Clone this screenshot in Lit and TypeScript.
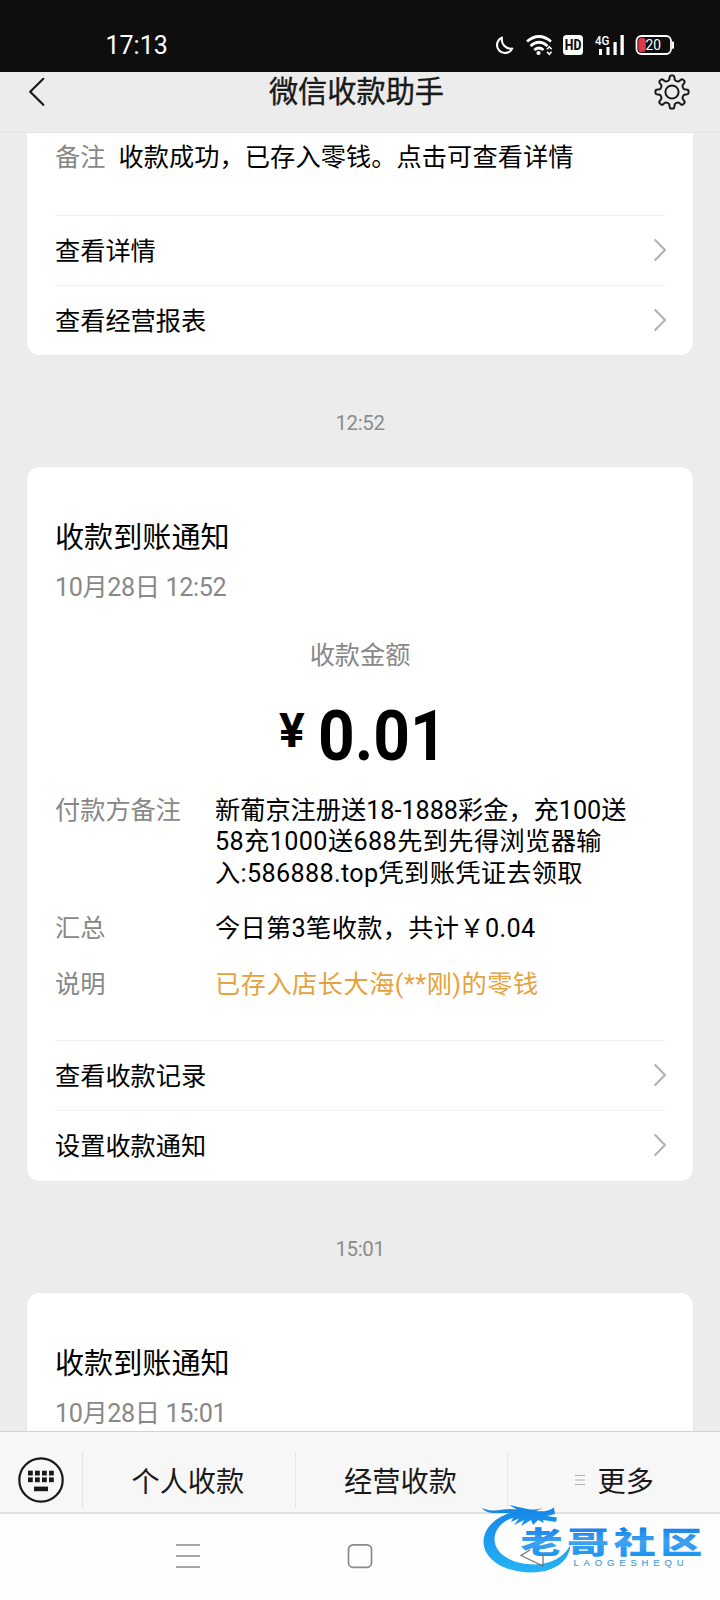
import { LitElement, html, css, svg, nothing } from "lit";
import { customElement, property } from "lit/decorators.js";

const font = css`Roboto, "Noto Sans CJK SC", sans-serif`;

@customElement("status-bar")
class StatusBar extends LitElement {
  static styles = css`
    :host { display: flex; height: 72px; background: #0e0e0e; color: #fff; font-family: ${font};
      box-sizing: border-box; padding: 27px 44px 9px 105.5px; align-items: center; justify-content: space-between; }
    .clock { font-size: 25px; line-height: 36px; letter-spacing: 0; padding-top: 2px; }
    svg { display: block; }
    .small { font: 500 13px Roboto, sans-serif; fill: #fff; }
    .hd { font: 800 15px Roboto, sans-serif; fill: #0e0e0e; }
    .pct { font: 400 15px Roboto, sans-serif; fill: #fff; }
  `;
  render() {
    return html`
      <span class="clock">17:13</span>
      <svg width="182" height="24" viewBox="494 33 182 24">
        <path d="M502 37.6A8 8 0 1 0 512.2 48.6A9.2 9.2 0 0 1 502 37.6Z" fill="none" stroke="#fff" stroke-width="2.1" stroke-linejoin="round"/>
        <g fill="none" stroke="#fff" stroke-width="2.7">
          <path d="M527 41.5Q539 31.5 551 41.5"/>
          <path d="M530.5 46Q539 38.5 547.5 46"/>
          <path d="M534.3 50Q539 46 543.5 50"/>
        </g>
        <circle cx="538.5" cy="53" r="2.1" fill="#fff"/>
        <path d="M547 49.3L549.3 46.8L551.6 49.3M547 51.7L549.3 54.2L551.6 51.7" fill="none" stroke="#fff" stroke-width="1.6"/>
        <rect x="563" y="35" width="20" height="20" rx="3.5" fill="#fff"/>
        <text class="hd" x="564.8" y="50.3" textLength="16.6" lengthAdjust="spacingAndGlyphs">HD</text>
        <text class="small" x="595" y="45" textLength="14.5" lengthAdjust="spacingAndGlyphs">4G</text>
        <path d="M599 49h3v6h-3zM606.5 47h3v8h-3zM613.5 42h3.2v13h-3.2zM620.5 35h3.3v20h-3.3z" fill="#fff"/>
        <rect x="636.5" y="36" width="34.5" height="18" rx="5" fill="none" stroke="#fff" stroke-width="1.8"/>
        <rect x="638.3" y="37.8" width="7.5" height="14.4" rx="3.4" fill="#dc3a4b"/>
        <path d="M672 41.5h1.2q.8 0 .8 .8v5.6q0 .8-.8 .8H672z" fill="#fff"/>
        <text class="pct" x="645.5" y="50.3" textLength="15.5" lengthAdjust="spacingAndGlyphs">20</text>
      </svg>
    `;
  }
}

/** Outline of a gear with eight rounded teeth around the origin. */
function gearPath(inner: number, outer: number): string {
  const point = (radius: number, degrees: number) => {
    const a = (degrees * Math.PI) / 180;
    return `${(radius * Math.sin(a)).toFixed(2)} ${(-radius * Math.cos(a)).toFixed(2)}`;
  };
  let d = "";
  for (let i = 0; i < 8; i++) {
    const c = i * 45;
    d += `${i ? "L" : "M"}${point(inner, c - 13)}L${point(outer - 2, c - 9.5)}`;
    d += `Q${point(outer, c - 8)} ${point(outer, c - 4)}L${point(outer, c + 4)}`;
    d += `Q${point(outer, c + 8)} ${point(outer - 2, c + 9.5)}L${point(inner, c + 13)}`;
    d += `Q${point(inner - 1.2, c + 22.5)} ${point(inner, c + 32)}`;
  }
  return d + "Z";
}

@customElement("chat-header")
class ChatHeader extends LitElement {
  static styles = css`
    :host { display: flex; height: 61px; background: #ececec; border-bottom: 1px solid #e3e3e3; font-family: ${font};
      box-sizing: border-box; padding: 0 29px 21px 28px; align-items: center; justify-content: space-between; }
    h1 { margin: 0 6px 0 0; padding-top: 1px; font-size: 29.2px; font-weight: 400; line-height: 40px; color: #191919; -webkit-text-stroke: 0.4px #191919; }
    .side { width: 40px; display: flex; }
    .right { justify-content: flex-end; }
  `;
  render() {
    return html`
      <div class="side">
        <svg width="18" height="30" viewBox="0 0 18 30"><path d="M15.3 1.8L2.2 14.8L15.3 27.8" fill="none" stroke="#191919" stroke-width="2.2" stroke-linecap="round" stroke-linejoin="round"/></svg>
      </div>
      <h1>微信收款助手</h1>
      <div class="side right">
        <svg width="38" height="38" viewBox="-19 -19 38 38">
          <path d=${gearPath(12.4, 16.6)} fill="none" stroke="#191919" stroke-width="2" stroke-linejoin="round"/>
          <circle r="6.6" fill="none" stroke="#191919" stroke-width="2"/>
        </svg>
      </div>
    `;
  }
}

@customElement("link-row")
class LinkRow extends LitElement {
  @property() label = "";
  static styles = css`
    :host { display: flex; height: 70px; box-sizing: border-box; border-top: 1px solid #f0f0f0; align-items: center;
      justify-content: space-between; font: 25.2px/36px ${font}; color: #000; padding-top: 3px; }
    svg { display: block; margin: -5px -2px 0 0; }
  `;
  render() {
    return html`<span>${this.label}</span>
      <svg width="14" height="24" viewBox="0 0 14 24"><path d="M2.2 2L12 12L2.2 22" fill="none" stroke="#b2b2b2" stroke-width="2.1" stroke-linecap="round" stroke-linejoin="round"/></svg>`;
  }
}

interface Field { label: string; lines: { text: string; spacing?: number }[]; accent?: boolean; }

@customElement("notice-card")
class NoticeCard extends LitElement {
  @property() time = "";
  @property() amount = "";
  @property({ attribute: false }) fields: Field[] = [];
  @property({ attribute: false }) links: string[] = [];
  static styles = css`
    :host { display: block; background: #fff; border-radius: 13px; padding: 49px 28px 0; font-family: ${font}; }
    h2 { margin: 0; font-size: 29.1px; font-weight: 400; line-height: 44px; color: #000; }
    .time { font-size: 25.2px; line-height: 36px; color: #888; margin-top: 10px; letter-spacing: -0.4px; }
    .caption { font-size: 25.2px; line-height: 36px; color: #888; text-align: center; margin-top: 32px; }
    .amount { display: flex; height: 80px; margin-top: 22px; padding-left: 224px; color: #000; font-weight: 700; }
    .yen { font-size: 48px; line-height: 70px; width: 38.5px; }
    .sum { font-size: 70px; line-height: 80px; transform: scaleX(0.915); transform-origin: left; }
    .fields { display: grid; grid-template-columns: 160px 1fr; row-gap: 24px; margin: 19px 0 40px; font-size: 25.2px; line-height: 31.4px; }
    .label { color: #888; }
    .value { color: #000; white-space: nowrap; }
    .accent { color: #e6a23c; }
    .line { display: block; }
  `;
  render() {
    return html`
      <h2>收款到账通知</h2>
      <div class="time">${this.time}</div>
      ${this.amount ? html`
        <div class="caption">收款金额</div>
        <div class="amount"><span class="yen">¥</span><span class="sum">${this.amount}</span></div>
        <div class="fields">
          ${this.fields.map((f) => html`
            <span class="label">${f.label}</span>
            <span class="value ${f.accent ? "accent" : ""}">${f.lines.map((l) => html`<span class="line" style="letter-spacing:${l.spacing ?? 0}px">${l.text}</span>`)}</span>`)}
        </div>
        ${this.links.map((l) => html`<link-row label=${l}></link-row>`)}` : nothing}
    `;
  }
}

@customElement("menu-bar")
class MenuBar extends LitElement {
  static styles = css`
    :host { display: grid; grid-template-columns: 82px repeat(3, 1fr); height: 83px; box-sizing: border-box; background: #f7f7f7;
      border-top: 1px solid #d2d2d2; border-bottom: 2px solid #e0e0e0; font: 28.2px/40px ${font}; color: #191919; padding-top: 20px; }
    .keys { display: flex; justify-content: center; padding-top: 5px; box-sizing: border-box; }
    .item { height: 56px; display: flex; justify-content: center; align-items: center; box-sizing: border-box;
      border-left: 1px solid #e6e6e6; padding: 5px 2px 0 0; gap: 12px; }
    .more { padding-right: 0; padding-left: 1px; }
    .more svg { margin-top: -5px; }
  `;
  render() {
    return html`
      <div class="keys">
        <svg width="46" height="46" viewBox="-23 -23 46 46">
          <circle r="21.7" fill="none" stroke="#191919" stroke-width="2.2"/>
          ${[-13, -6, 1, 8].map((x) => svg`<rect x=${x} y="-9.3" width="4.8" height="4.8" fill="#191919"/><rect x=${x} y="-2.6" width="4.8" height="4.8" fill="#191919"/>`)}
          <rect x="-7" y="6.6" width="14" height="4.6" fill="#191919"/>
        </svg>
      </div>
      <div class="item">个人收款</div>
      <div class="item">经营收款</div>
      <div class="item more">
        <svg width="10" height="12" viewBox="0 0 10 12"><path d="M0 1.5h10M0 6h10M0 10.5h10" stroke="#b0b0b0" stroke-width="1"/></svg>
        <span>更多</span>
      </div>
    `;
  }
}

@customElement("nav-keys")
class NavKeys extends LitElement {
  static styles = css`
    :host { display: grid; grid-template-columns: 172px 172px 172px; justify-content: center; justify-items: center;
      height: 86px; padding-top: 28px; box-sizing: border-box; background: #fefefe; }
    svg { display: block; fill: none; stroke: #8a8a8a; stroke-width: 1.7; }
  `;
  render() {
    return html`
      <svg width="26" height="28" viewBox="0 0 26 28"><path d="M1 3h24M1 14h24M1 25h24"/></svg>
      <svg width="26" height="28" viewBox="0 0 26 28"><rect x="1.5" y="2.8" width="23" height="22.5" rx="4.5"/></svg>
    `;
  }
}

@customElement("brand-mark")
class BrandMark extends LitElement {
  static styles = css`
    :host { display: block; }
    svg { display: block; }
    .name { font: 900 30px "Noto Sans CJK SC", sans-serif; }
    .latin { font: 400 9.5px "Liberation Sans", sans-serif; fill: #4f9edb; stroke: #4f9edb; stroke-width: 0.2; }
  `;
  render() {
    return html`
      <svg width="240" height="80" viewBox="476 1498 240 80">
        <defs>
          <linearGradient id="body" x1="0" y1="1505" x2="0" y2="1574" gradientUnits="userSpaceOnUse"><stop offset="0" stop-color="#1584e6"/><stop offset="1" stop-color="#25b4f6"/></linearGradient>
          <linearGradient id="ink" x1="0" y1="0" x2="0" y2="1"><stop offset="0.2" stop-color="#1280e8"/><stop offset="0.55" stop-color="#3ea2f2"/><stop offset="0.9" stop-color="#1794f0"/></linearGradient>
        </defs>
        <path fill="url(#body)" d="M510 1513C494 1518 483.500 1529 483.500 1542C484 1560 505 1572.500 532 1572.500C554 1572 569 1562 570.500 1545C564 1557 552 1564 534 1564.500C510 1564 494.500 1553 494.500 1539C495 1529 502 1521 513 1518L511 1522L519 1518.500L514 1525L524 1520L521 1526L531 1520L533 1525L538 1520L544 1523L543 1520L556 1522L557 1517.500L547 1516L555 1514L554 1507.500C549 1511 543 1512 536 1511L543 1508C535 1510 530 1510 525 1508.500L509 1505L517 1509.500C508 1508 500 1510 494 1510.500C489 1511 485 1509 482 1508C485 1512 490 1513.500 496 1513Z"/>
        <text class="name" fill="url(#ink)" transform="translate(520.5 1552.500) scale(1.4 1)" letter-spacing="3.300">老哥社区</text>
        <text class="latin" x="573.5" y="1566" textLength="110">LAOGESHEQU</text>
        <path d="M530 1550L521 1555.500L543 1566V1553" fill="none" stroke="#777" stroke-width="1.3"/>
      </svg>
    `;
  }
}

@customElement("app-root")
export class AppRoot extends LitElement {
  static styles = css`
    :host { display: flex; flex-direction: column; position: relative; width: 720px; height: 1600px; overflow: hidden;
      background: #ececec; font-family: ${font}; }
    .feed { flex: 1; min-height: 0; overflow: hidden; padding: 0 27px; }
    .prior { height: 222px; box-sizing: border-box; background: #fff; border-radius: 0 0 13px 13px; padding: 7px 28px 0; }
    .remark { display: flex; gap: 13px; height: 75px; font-size: 25.2px; line-height: 36px; white-space: nowrap; color: #000; }
    .remark span + span { letter-spacing: 0.1px; }
    .muted { color: #888; }
    .stamp { height: 112px; box-sizing: border-box; padding-top: 54px; text-align: center; font-size: 20.5px; line-height: 28px;
      letter-spacing: -0.4px; color: #8c8c8c; }
    .second { height: 714px; box-sizing: border-box; }
    .third { height: 300px; box-sizing: border-box; }
    .mark { position: absolute; left: 476px; top: 1498px; }
  `;
  private fields: Field[] = [
    { label: "付款方备注", lines: [
      { text: "新葡京注册送18-1888彩金，充100送" },
      { text: "58充1000送688先到先得浏览器输", spacing: 0.4 },
      { text: "入:586888.top凭到账凭证去领取", spacing: 0.35 } ] },
    { label: "汇总", lines: [{ text: "今日第3笔收款，共计￥0.04", spacing: 0.35 }] },
    { label: "说明", lines: [{ text: "已存入店长大海(**刚)的零钱", spacing: 0.5 }], accent: true },
  ];
  render() {
    return html`
      <status-bar></status-bar>
      <chat-header></chat-header>
      <div class="feed">
        <div class="prior">
          <div class="remark"><span class="muted">备注</span><span>收款成功，已存入零钱。点击可查看详情</span></div>
          <link-row label="查看详情"></link-row>
          <link-row label="查看经营报表"></link-row>
        </div>
        <div class="stamp">12:52</div>
        <notice-card class="second" time="10月28日 12:52" amount="0.01" .fields=${this.fields}
          .links=${["查看收款记录", "设置收款通知"]}></notice-card>
        <div class="stamp">15:01</div>
        <notice-card class="third" time="10月28日 15:01"></notice-card>
      </div>
      <menu-bar></menu-bar>
      <nav-keys></nav-keys>
      <brand-mark class="mark"></brand-mark>
    `;
  }
}
